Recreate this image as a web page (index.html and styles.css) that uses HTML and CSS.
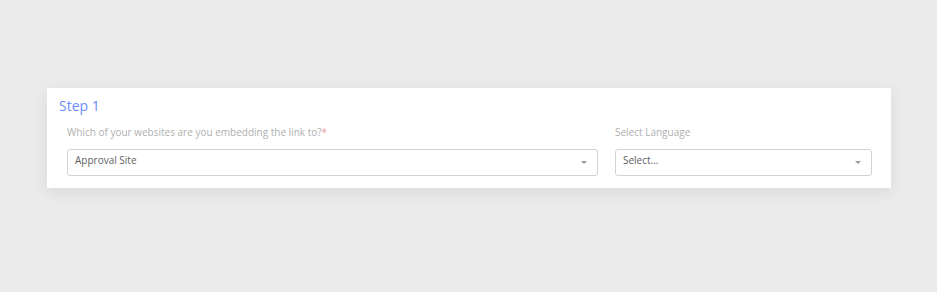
FILE: index.html
```html
<!DOCTYPE html>
<html lang="en">

<head>
	<meta charset="UTF-8">
	<meta name="viewport" content="width=device-width, initial-scale=1.0">
	<title>Embed Link</title>
	<link rel="stylesheet" href="styles.css">
</head>

<body>
	<div class="step-card">
		<h2 class="step-title">Step 1</h2>
		<div class="step-fields">
			<div class="field field-site">
				<label>Which of your websites are you embedding the link to?<span class="req">*</span></label>
				<div class="select">
					<span>Approval Site</span>
					<span class="caret"></span>
				</div>
			</div>
			<div class="field field-lang">
				<label>Select Language</label>
				<div class="select">
					<span>Select...</span>
					<span class="caret"></span>
				</div>
			</div>
		</div>
	</div>
</body>

</html>
```

FILE: styles.css
```css
* {
	margin: 0;
	padding: 0;
	box-sizing: border-box;
	font-family: 'Open Sans', 'Liberation Sans', sans-serif;
}

body {
	background: #ebebeb;
	padding: 88px 46px 0 47px;
	height: 292px;
}

.step-card {
	background: #fff;
	box-shadow: 0 4px 14px rgba(0, 0, 0, 0.08);
	padding: 8px 19px 11px 20px;
	height: 100px;
}

.step-title {
	font-size: 14px;
	font-weight: 400;
	color: #6b8dfb;
	margin-left: -8px;
	line-height: 19px;
	margin-bottom: 10px;
}

.step-fields {
	display: flex;
	gap: 17px;
}

.field label {
	display: block;
	font-size: 10px;
	color: #b0b0b0;
	line-height: 14px;
	margin-bottom: 10px;
}

.req {
	color: #e8a0a0;
}

.field-site {
	width: 531px;
}

.field-lang {
	flex: 1;
}

.select {
	display: flex;
	align-items: center;
	justify-content: space-between;
	height: 27px;
	border: 1px solid #d2d2d2;
	border-radius: 3px;
	padding: 0 10px 0 7px;
	font-size: 10px;
	color: #5e5e5e;
}

.select span:first-child {
	margin-top: -6px;
}

.caret {
	width: 0;
	height: 0;
	border-left: 3.5px solid transparent;
	border-right: 3.5px solid transparent;
	border-top: 3.5px solid #9a9a9a;
}
```
